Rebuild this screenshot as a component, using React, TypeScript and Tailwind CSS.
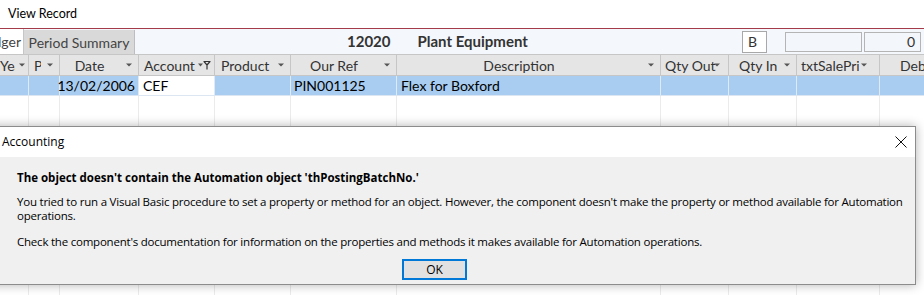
import React from "react";

const Arrow = () => (
  <svg width="6" height="4" viewBox="0 0 6 4" className="shrink-0">
    <path d="M0 0.5H6L3 3.5Z" fill="#555" />
  </svg>
);

const FilterIcon = () => (
  <svg width="13" height="10" viewBox="0 0 13 10" className="shrink-0">
    <path d="M0 3.5H5L2.5 6.5Z" fill="#555" />
    <path d="M5.5 1.5H12.5M6 1.5L9 5V9.5M12 1.5L9 5" fill="none" stroke="#333" strokeWidth="1.2" />
  </svg>
);

type Col = { w: string; label: string; arrowPad: string; filter?: boolean; labelCls?: string };

const cols: Col[] = [
  { w: "w-[29px]", label: "Year", arrowPad: "w-[13px] justify-center", labelCls: "text-left overflow-hidden" },
  { w: "w-[31px]", label: "P", arrowPad: "w-[18px] justify-center", labelCls: "text-left pl-[5px] overflow-hidden" },
  { w: "w-[79px]", label: "Date", arrowPad: "w-[19px] justify-center", labelCls: "text-center overflow-hidden" },
  { w: "w-[76px]", label: "Account", arrowPad: "w-[16px] justify-start", filter: true, labelCls: "text-left pl-[5px] overflow-hidden" },
  { w: "w-[76px]", label: "Product", arrowPad: "w-[19px] justify-center", labelCls: "text-left pl-[6px] overflow-hidden" },
  { w: "w-[106px]", label: "Our Ref", arrowPad: "w-[19px] justify-center", labelCls: "text-center overflow-hidden" },
  { w: "w-[264px]", label: "Description", arrowPad: "w-[19px] justify-center", labelCls: "text-center overflow-hidden" },
  { w: "w-[68px]", label: "Qty Out", arrowPad: "w-[14px] justify-start", labelCls: "text-left pl-[4px] overflow-visible" },
  { w: "w-[68px]", label: "Qty In", arrowPad: "w-[19px] justify-center", labelCls: "text-left pl-[10px] overflow-hidden" },
  { w: "w-[83px]", label: "txtSalePrice", arrowPad: "w-[20px] justify-start pl-[2px]", labelCls: "text-left pl-[4px] overflow-hidden" },
];

export default function App() {
  return (
    <div className="relative w-[924px] h-[295px] overflow-hidden bg-white font-['Lato',sans-serif] text-[14px] text-[#333]">
      {/* Top title */}
      <div className="h-[28px] flex items-center pl-[8px] text-[12.5px] text-black">View Record</div>
      <div className="h-px bg-[#a33c48]" />

      {/* Tabs + form header */}
      <div className="h-[26px] flex items-stretch bg-[#f4f7fb] border-b border-[#c6c6c6]">
        <div className="w-[24px] overflow-hidden flex justify-end items-center bg-white border-r border-[#c6c6c6] pr-[2px] text-[#444]">
          <span className="whitespace-nowrap">Ledger</span>
        </div>
        <div className="w-[111px] mt-px flex items-center justify-center bg-[#d9d9d9] border-r border-[#bdbdbd] text-[#444] whitespace-nowrap">
          Period Summary
        </div>
        <div className="flex items-center font-bold text-[15px] text-[#333] ml-[212px]">
          <span>12020</span>
          <span className="ml-[27px]">Plant Equipment</span>
        </div>
        <div className="ml-auto flex items-center pr-[3px]">
          <div className="w-[25px] h-[22px] bg-white border border-[#a8a8a8] flex items-center pl-[5px] text-[#333]">B</div>
          <div className="w-[77px] h-[20px] ml-[18px] bg-[#f3f6fa] border border-[#b4b4b4]" />
          <div className="w-[57px] h-[20px] ml-[2px] bg-[#f3f6fa] border border-[#b4b4b4] flex items-center justify-end pr-[5px]">0</div>
        </div>
      </div>

      {/* Column header row */}
      <div className="h-[21px] flex bg-[#e5e5e5] border-b border-[#c6c6c6]">
        {cols.map((c, i) => (
          <div key={i} className={`${c.w} shrink-0 h-full flex items-center border-r border-[#c6c6c6] overflow-hidden`}>
            <div className={`flex-1 min-w-0 whitespace-nowrap ${c.labelCls ?? ""}`}>{c.label}</div>
            <div className={`${c.arrowPad} shrink-0 flex items-center`}>
              {c.filter ? <FilterIcon /> : <Arrow />}
            </div>
          </div>
        ))}
        <div className="w-[100px] shrink-0 h-full flex items-center pl-[20px] whitespace-nowrap">Debit</div>
      </div>

      {/* Data row */}
      <div className="h-[20px] flex bg-[#a9cdf1] text-black border-b border-[#dbe6f2]">
        <div className="w-[29px] shrink-0 border-r border-[#dfeaf6]" />
        <div className="w-[31px] shrink-0 border-r border-[#dfeaf6]" />
        <div className="w-[79px] shrink-0 border-r border-[#dfeaf6] flex items-center justify-end pr-[3px]">13/02/2006</div>
        <div className="w-[76px] shrink-0 border-r border-[#dfeaf6] bg-white flex items-center pl-[4px]">CEF</div>
        <div className="w-[76px] shrink-0 border-r border-[#dfeaf6]" />
        <div className="w-[106px] shrink-0 border-r border-[#dfeaf6] flex items-center pl-[3px]">PIN001125</div>
        <div className="w-[264px] shrink-0 border-r border-[#dfeaf6] flex items-center pl-[4px]">Flex for Boxford</div>
        <div className="w-[68px] shrink-0 border-r border-[#dfeaf6]" />
        <div className="w-[68px] shrink-0 border-r border-[#dfeaf6]" />
        <div className="w-[83px] shrink-0 border-r border-[#dfeaf6]" />
        <div className="w-[100px] shrink-0" />
      </div>

      {/* Empty grid area */}
      <div className="h-[200px] flex">
        {cols.map((c, i) => (
          <div key={i} className={`${c.w} shrink-0 h-full border-r border-[#ebebeb]`} />
        ))}
      </div>

      {/* Message box */}
      <div className="absolute left-[-47px] top-[126px] w-[963px] h-[159px] border border-[#8c8c8c] bg-[#f0f0f0] shadow-[0_0_10px_rgba(0,0,0,0.3)] font-['Open_Sans',sans-serif] text-[12px] text-black flex flex-col">
        <div className="h-[30px] shrink-0 bg-white flex items-center justify-between pl-[48px] pr-[8px]">
          <span>Accounting</span>
          <svg width="12" height="12" viewBox="0 0 12 12">
            <path d="M0.5 0.5L11.5 11.5M11.5 0.5L0.5 11.5" stroke="#111" strokeWidth="1" />
          </svg>
        </div>
        <div className="pl-[63px] pt-[14px] leading-[14px] whitespace-nowrap text-[11.5px] tracking-[-0.22px]">
          <p className="font-bold tracking-[0px]">The object doesn't contain the Automation object 'thPostingBatchNo.'</p>
          <p className="mt-[10px]">
            You tried to run a Visual Basic procedure to set a property or method for an object. However, the component doesn't make the property or method available for Automation
            <br />
            operations.
          </p>
          <p className="mt-[12px]">Check the component's documentation for information on the properties and methods it makes available for Automation operations.</p>
        </div>
        <div className="mt-[10px] flex justify-center">
          <div className="w-[65px] h-[21px] bg-[#e1e1e1] border-2 border-[#0078d7] flex items-center justify-center">OK</div>
        </div>
      </div>
    </div>
  );
}
